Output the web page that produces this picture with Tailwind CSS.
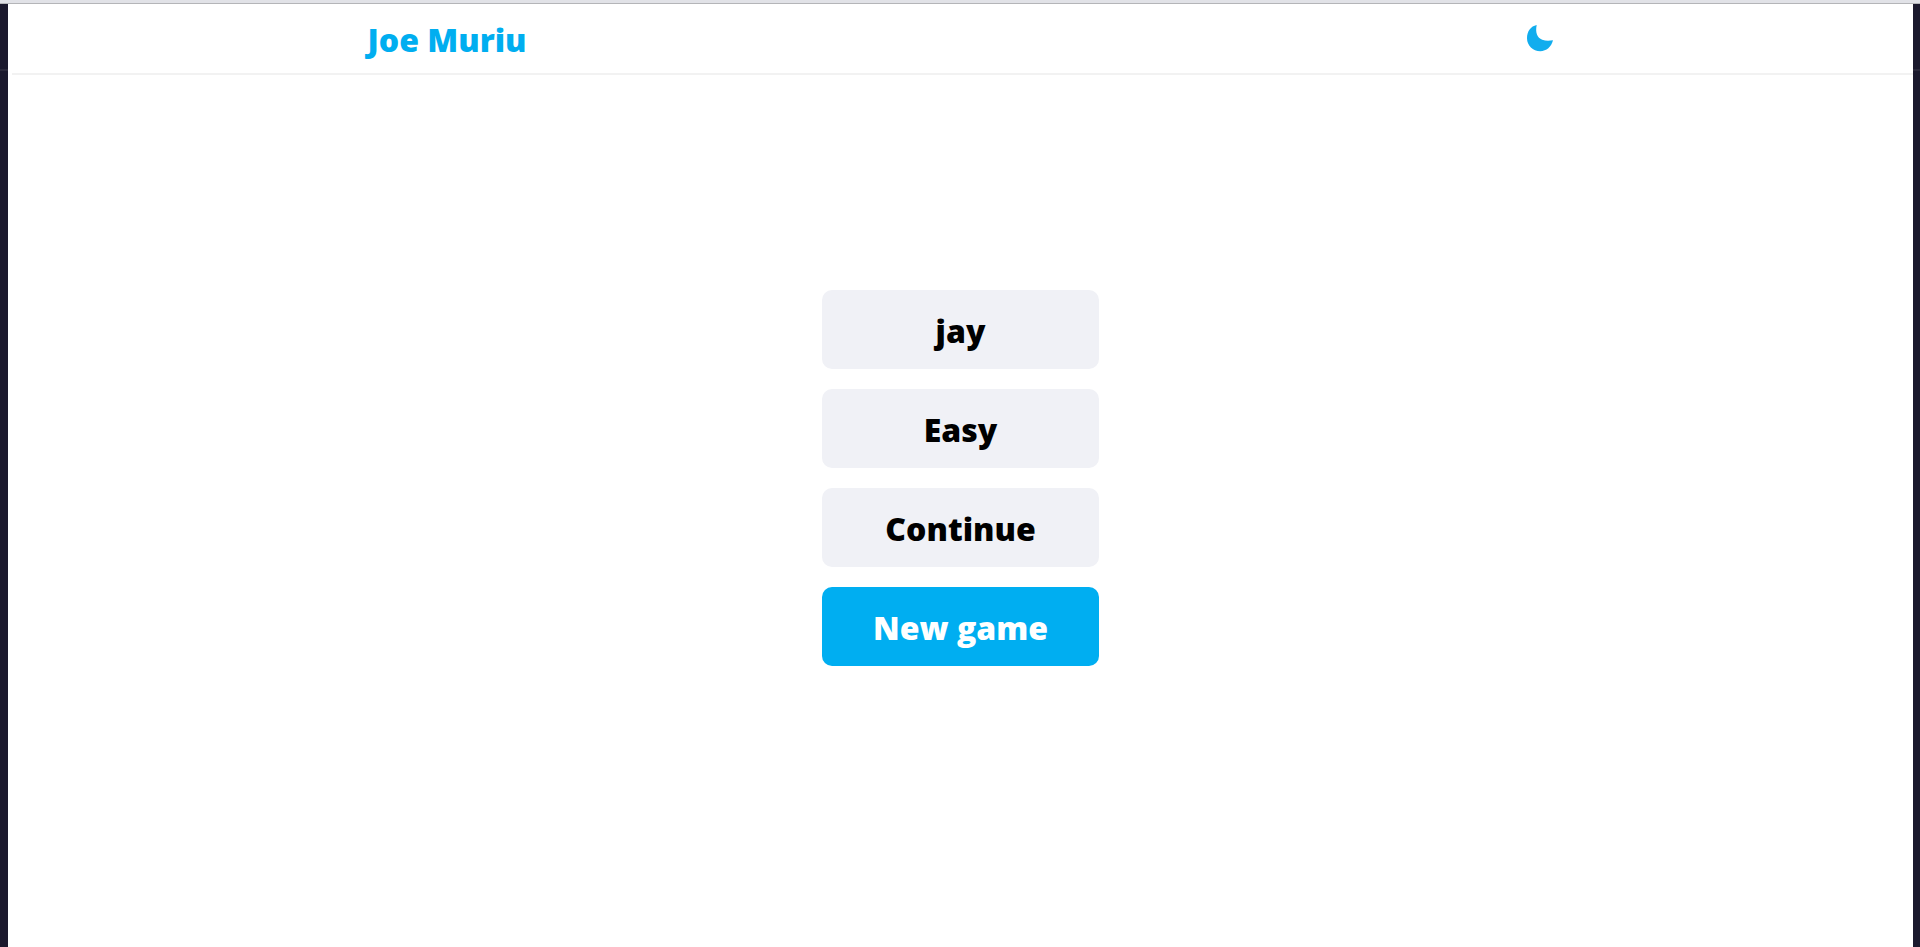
<!DOCTYPE html>
<html lang="en">
<head>
<meta charset="utf-8">
<meta name="viewport" content="width=device-width, initial-scale=1">
<title>Joe Muriu</title>
<script src="https://cdn.jsdelivr.net/npm/@tailwindcss/browser@4"></script>
</head>
<body class="flex min-h-screen flex-col bg-[#1b192d] bg-[linear-gradient(transparent_69px,#2b293b_69px,#2b293b_71px,transparent_71px)] font-['Open_Sans',sans-serif] text-black">
<div class="h-1 border-b border-[#b4b5b8] bg-[#e1e2e7]"></div>
<div class="ml-2 mr-[7px] flex grow flex-col bg-white">
  <header class="ml-1 border-b-2 border-[#f2f2f2]">
    <div class="mx-auto flex h-[69px] max-w-[1190px] items-center justify-between pt-0.5">
      <a href="#" class="text-[32px] leading-10 font-extrabold text-[#00aef0]">Joe Muriu</a>
      <button type="button" aria-label="Toggle dark mode" class="mr-1 text-[#11adee]">
        <svg class="mb-1 block h-7 w-7" viewBox="0 0 28 28" fill="currentColor" aria-hidden="true"><path d="M10.7 1.1C9.1 8.8 11.3 13.9 16.2 15.7C19.4 17 23.3 16.8 27 16.3C25.4 22.8 20.5 27.2 14.3 27.2C6.9 27.2 1 21.5 1 14.2C1 7.6 4.8 2.3 10.7 1.1Z"/></svg>
      </button>
    </div>
  </header>
  <main class="mx-auto flex w-full max-w-[277px] flex-col gap-5 pt-[215px] pb-10 text-[32px] leading-10 font-extrabold">
    <button type="button" class="rounded-[10px] bg-[#f0f1f6] pt-[21px] pb-[18px]">jay</button>
    <button type="button" class="rounded-[10px] bg-[#f0f1f6] pt-[21px] pb-[18px]">Easy</button>
    <button type="button" class="rounded-[10px] bg-[#f0f1f6] pt-[21px] pb-[18px]">Continue</button>
    <button type="button" class="rounded-[10px] bg-[#00aef1] pt-[21px] pb-[18px] text-white">New game</button>
  </main>
</div>
</body>
</html>
